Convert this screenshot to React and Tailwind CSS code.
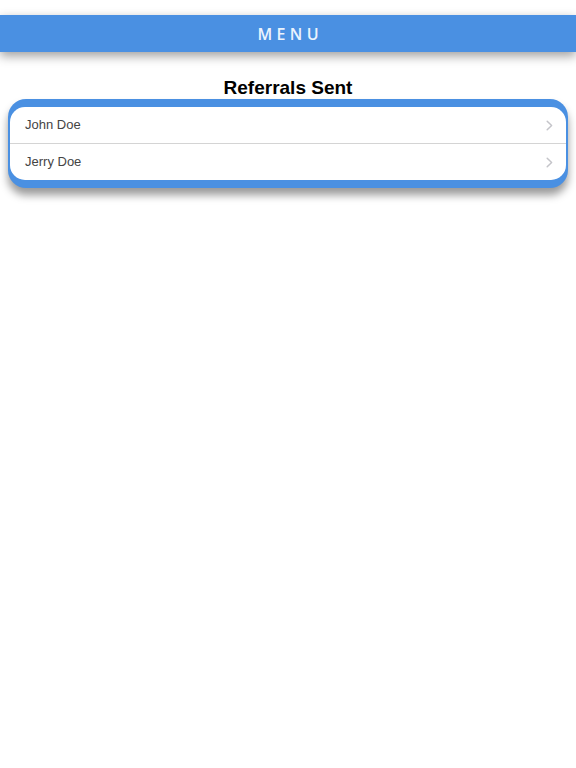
const referrals = ["John Doe", "Jerry Doe"];

function Chevron() {
  return (
    <svg width="7" height="11" viewBox="0 0 7 11" fill="none" className="shrink-0">
      <path d="M1.2 1.2 5.6 5.5 1.2 9.8" stroke="#c4c4c9" strokeWidth="1.5" strokeLinecap="round" strokeLinejoin="round" />
    </svg>
  );
}

export default function App() {
  return (
    <div className="min-h-[768px] bg-white pt-[15px] font-['Liberation_Sans',Arial,sans-serif]">
      {/* Top bar */}
      <div className="h-[37px] bg-[#4a90e2] flex items-center justify-center shadow-[0_4px_10px_rgba(0,0,0,0.38)]">
        <span className="text-[16px] font-semibold tracking-[0.27em] pl-[0.27em] text-[#eaf3fd] font-['Open_Sans',sans-serif]">
          MENU
        </span>
      </div>

      <h1 className="mt-[25px] text-center text-[19px] leading-[21px] font-bold text-black">
        Referrals Sent
      </h1>

      {/* Card */}
      <div className="mx-2 mt-[1px] rounded-[18px] bg-[#4a90e2] px-[2px] pt-[8px] pb-[8px] shadow-[0_7px_9px_rgba(0,0,0,0.4)]">
        <ul className="bg-white rounded-[15px] overflow-hidden">
          {referrals.map((name, i) => (
            <li
              key={name}
              className={
                "h-[36px] flex items-center justify-between pl-[15px] pr-[13px] " +
                (i > 0 ? "border-t border-[#d4d4d4] h-[37px]" : "")
              }
            >
              <span className="text-[13px] text-[#444444]">{name}</span>
              <Chevron />
            </li>
          ))}
        </ul>
      </div>
    </div>
  );
}
